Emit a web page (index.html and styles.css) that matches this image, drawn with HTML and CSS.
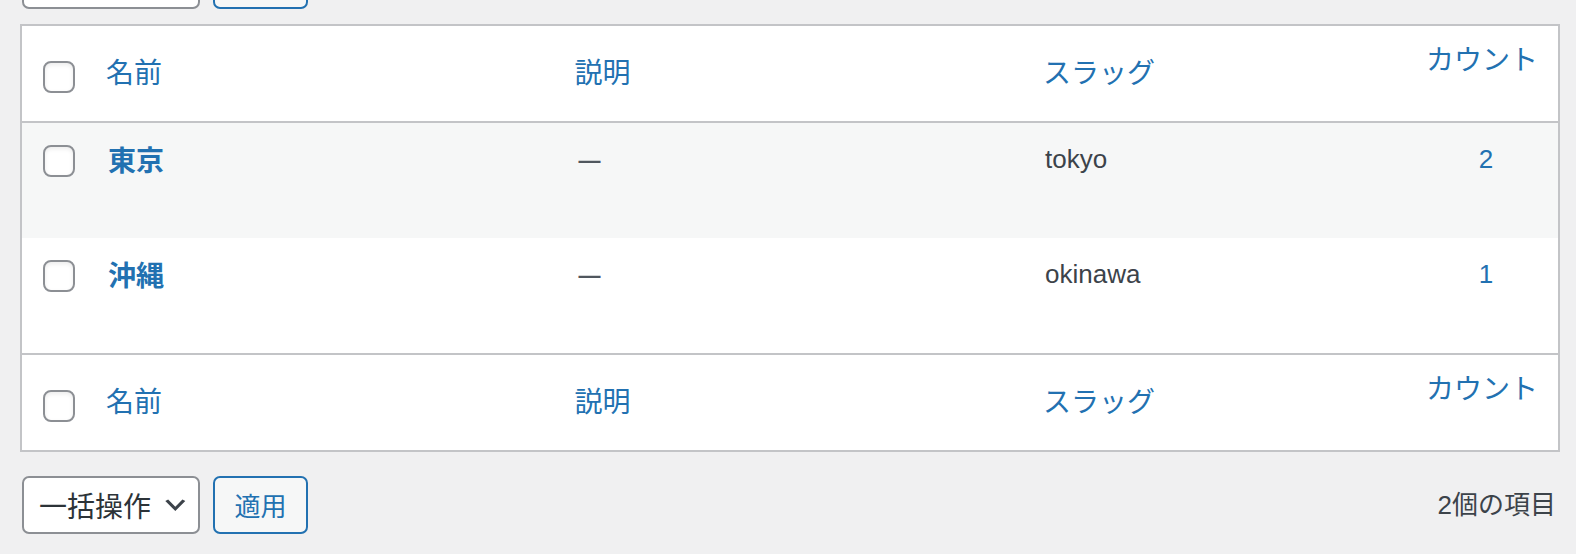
FILE: index.html
```html
<!DOCTYPE html>
<html lang="ja">
<head>
<meta charset="utf-8">
<title>タグ</title>
<link rel="stylesheet" href="styles.css">
</head>
<body>
<div class="wrap">
  <div class="tablenav tablenav-top" aria-hidden="true">
    <div class="bulk-select"></div>
    <span class="btn-apply btn-ghost"></span>
  </div>

  <table class="list">
    <colgroup>
      <col class="c-check">
      <col class="c-name">
      <col class="c-desc">
      <col class="c-slug">
      <col class="c-count">
    </colgroup>
    <thead>
      <tr class="head-row">
        <th class="check"><span class="cb cb-head"></span></th>
        <th><a class="sort">名前</a></th>
        <th><a class="sort">説明</a></th>
        <th><a class="sort">スラッグ</a></th>
        <th class="num"><a class="sort sort-num">カウント</a></th>
      </tr>
    </thead>
    <tbody>
      <tr class="row alt">
        <td class="check"><span class="cb"></span></td>
        <td class="name"><a class="row-title">東京</a></td>
        <td class="desc"><span class="dash">—</span></td>
        <td class="slug">tokyo</td>
        <td class="num"><a class="count-link">2</a></td>
      </tr>
      <tr class="row">
        <td class="check"><span class="cb"></span></td>
        <td class="name"><a class="row-title">沖縄</a></td>
        <td class="desc"><span class="dash">—</span></td>
        <td class="slug">okinawa</td>
        <td class="num"><a class="count-link">1</a></td>
      </tr>
    </tbody>
    <tfoot>
      <tr class="foot-row">
        <th class="check"><span class="cb cb-head"></span></th>
        <th><a class="sort">名前</a></th>
        <th><a class="sort">説明</a></th>
        <th><a class="sort">スラッグ</a></th>
        <th class="num"><a class="sort sort-num">カウント</a></th>
      </tr>
    </tfoot>
  </table>

  <div class="tablenav tablenav-bottom">
    <div class="bulk-select">
      <span class="bulk-label">一括操作</span>
      <svg class="chev" viewBox="0 0 20 20" width="28.6" height="28.6"><path d="M5 6l5 5 5-5 2 1-7 7-7-7 2-1z"/></svg>
    </div>
    <button class="btn-apply" type="button">適用</button>
    <span class="displaying-num">2個の項目</span>
  </div>
</div>
</body>
</html>
```

FILE: styles.css
```css
* { box-sizing: border-box; }

html, body {
  margin: 0;
  padding: 0;
  background: #f0f0f1;
  font-family: "Liberation Sans", "Noto Sans CJK JP", sans-serif;
  color: #3c434a;
  overflow: hidden;
}

.wrap {
  padding: 0 16px 0 20px;
}

.tablenav {
  display: flex;
  align-items: center;
  padding-left: 2px;
}

.tablenav-top {
  margin-top: -49px;
}

.tablenav-bottom {
  margin-top: 24px;
}

.bulk-select {
  width: 178px;
  height: 58px;
  border: 2px solid #8c8f94;
  border-radius: 7px;
  background: #fff;
  display: flex;
  align-items: center;
  padding-left: 15px;
  color: #2c3338;
}

.bulk-label {
  font-size: 28px;
  line-height: 40px;
  font-family: "Noto Sans CJK JP", sans-serif;
}

.chev {
  margin-left: 10px;
  fill: #3c434a;
}

.btn-apply {
  margin-left: 13px;
  width: 95px;
  height: 58px;
  border: 2px solid #2271b1;
  border-radius: 7px;
  background: #f6f7f7;
  color: #2271b1;
  font-family: "Noto Sans CJK JP", sans-serif;
  font-size: 26px;
  line-height: 40px;
  padding: 0;
}

.btn-ghost {
  display: block;
}

.displaying-num {
  margin-left: auto;
  margin-right: 4px;
  font-size: 26px;
  line-height: 40px;
  color: #3c434a;
}

.list {
  margin-top: 15px;
  width: 100%;
  table-layout: fixed;
  border-collapse: separate;
  border-spacing: 0;
  border: 2px solid #c3c4c7;
  background: #fff;
}

.c-check { width: 66px; }
.c-desc { width: 468.5px; }
.c-slug { width: 381px; }
.c-count { width: 152px; }

th, td {
  padding: 0;
  text-align: left;
  font-weight: 400;
}

.head-row { height: 97px; }
.foot-row { height: 97px; }

.head-row th {
  vertical-align: middle;
  border-bottom: 2px solid #c3c4c7;
}

.foot-row th {
  vertical-align: middle;
  border-top: 2px solid #c3c4c7;
}

.sort {
  display: block;
  padding-left: 18px;
  font-size: 28px;
  line-height: 40px;
  color: #2271b1;
  text-decoration: none;
}

.num { text-align: center; }

.sort-num {
  padding-left: 0;
  padding-bottom: 26px;
  text-align: center;
}

.check {
  padding-left: 21px;
}

.cb {
  display: block;
  width: 32px;
  height: 32px;
  border: 2px solid #8c8f94;
  border-radius: 8px;
  background: #fff;
  box-shadow: inset 0 2px 4px rgba(0, 0, 0, 0.08);
}

.cb-head {
  margin-top: 6px;
}

.row { height: 115px; }
.row.alt td { background: #f6f7f7; }

.row td {
  vertical-align: top;
  padding: 16px 20px 0 20px;
  font-size: 26px;
  line-height: 40px;
  color: #3c434a;
}

.row td.check {
  padding: 22px 0 0 21px;
}

.row td.desc {
  padding-left: 22px;
}

.dash {
  font-size: 22px;
  font-weight: 700;
  color: #50575e;
}

.row td.num {
  padding-left: 8px;
  padding-right: 0;
}

.row-title {
  font-family: "Noto Sans CJK JP", sans-serif;
  font-size: 28px;
  font-weight: 700;
  color: #2271b1;
  text-decoration: none;
}

.count-link {
  color: #2271b1;
  text-decoration: none;
}
```
